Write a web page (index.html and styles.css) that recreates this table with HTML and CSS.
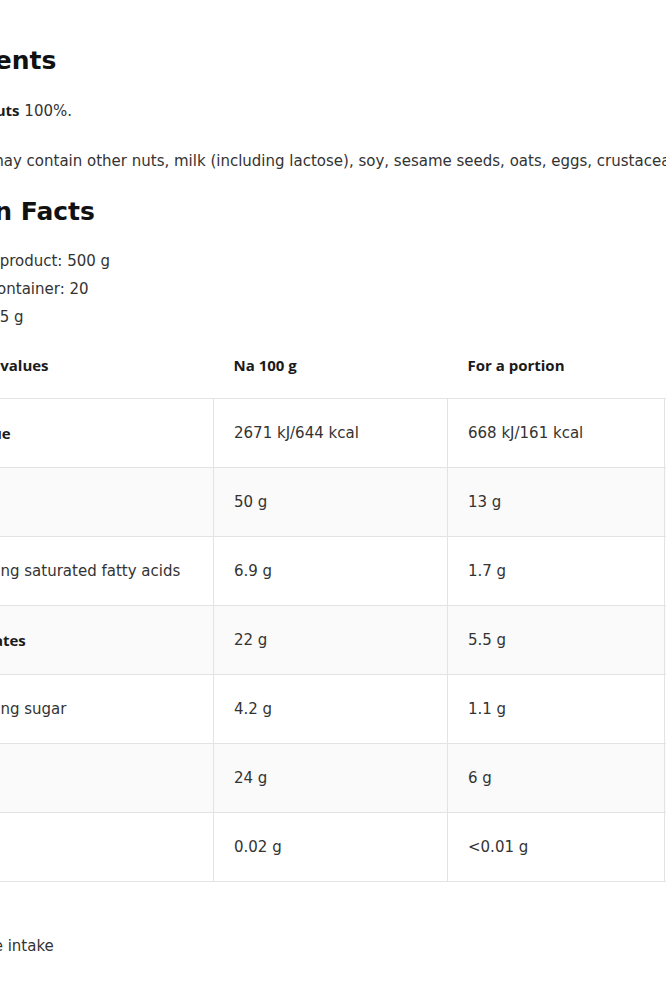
FILE: index.html
```html
<!DOCTYPE html>
<html lang="en">
<head>
<meta charset="utf-8">
<title>Peanut butter – Ingredients &amp; Nutrition Facts</title>
<link rel="stylesheet" href="styles.css">
</head>
<body>
<main class="page">
  <section class="block">
    <h2 class="title">Ingredients</h2>
    <p class="text ingredients"><strong>Roasted peanuts</strong> 100%.</p>
    <p class="text allergens">The product may contain other nuts, milk (including lactose), soy, sesame seeds, oats, eggs, crustaceans, fish, celery, mustard and lupine.</p>
  </section>
  <section class="block">
    <h2 class="title facts-title">Nutrition Facts</h2>
    <div class="meta">
      <p class="meta-line">Net weight of product: 500 g</p>
      <p class="meta-line">Portions per container: 20</p>
      <p class="meta-line">Portion size: 25 g</p>
    </div>
    <table class="nutri">
      <colgroup>
        <col class="c1"><col class="c2"><col class="c3"><col class="c4">
      </colgroup>
      <thead>
        <tr><th>Nutritional values</th><th>Na 100 g</th><th>For a portion</th><th>%RI*</th></tr>
      </thead>
      <tbody>
        <tr><td class="label">Energy value</td><td>2671 kJ/644 kcal</td><td>668 kJ/161 kcal</td><td>8%</td></tr>
        <tr><td class="label">Fat</td><td>50 g</td><td>13 g</td><td>19%</td></tr>
        <tr><td class="sub">- including saturated fatty acids</td><td>6.9 g</td><td>1.7 g</td><td>9%</td></tr>
        <tr><td class="label">Carbohydrates</td><td>22 g</td><td>5.5 g</td><td>2%</td></tr>
        <tr><td class="sub">- including sugar</td><td>4.2 g</td><td>1.1 g</td><td>1%</td></tr>
        <tr><td class="label">Protein</td><td>24 g</td><td>6 g</td><td>12%</td></tr>
        <tr><td class="label">Salt</td><td>0.02 g</td><td>&lt;0.01 g</td><td>0%</td></tr>
      </tbody>
    </table>
    <p class="text note">*RI - reference intake</p>
  </section>
</main>
</body>
</html>
```

FILE: styles.css
```css
html, body {
  margin: 0;
  padding: 0;
  background: #ffffff;
}
body {
  overflow: hidden;
  font-family: "DejaVu Sans", "Open Sans", sans-serif;
  color: #333333;
  font-size: 15px;
}
.page {
  margin-left: -106px;
  width: 1100px;
  padding-top: 45px;
}
.block {
  display: flex;
  flex-direction: column;
}
.title {
  margin: 0;
  font-family: "DejaVu Sans", sans-serif;
  font-size: 25px;
  line-height: 32px;
  font-weight: 700;
  color: #111111;
}
.text {
  margin: 0;
  line-height: 24px;
}
.text strong {
  font-family: "Open Sans", sans-serif;
  font-weight: 700;
  color: #1a1a1a;
}
.ingredients {
  margin-top: 21px;
}
.allergens {
  margin-top: 26px;
  white-space: nowrap;
}
.facts-title {
  margin-top: 23px;
  margin-left: -9px;
}
.meta {
  margin-top: 19px;
}
.meta-line {
  margin: 0;
  line-height: 28px;
}
.nutri {
  border-collapse: collapse;
  table-layout: fixed;
  width: 970px;
}
.c1 { width: 319px; }
.c2 { width: 234px; }
.c3 { width: 217px; }
.c4 { width: 200px; }
.nutri th {
  height: 67px;
  padding: 0 20px 0 20px;
  text-align: left;
  font-family: "Open Sans", sans-serif;
  font-weight: 700;
  color: #1a1a1a;
  border-bottom: 1px solid #e3e3e3;
}
.nutri th:first-child {
  padding-left: 18px;
}
.nutri td {
  height: 68px;
  padding: 0 20px;
  border: 1px solid #e3e3e3;
  color: #333333;
  white-space: nowrap;
}
.nutri tbody tr:nth-child(even) td {
  background: #fafafa;
}
.nutri td.label {
  font-family: "Open Sans", sans-serif;
  font-weight: 700;
  color: #1a1a1a;
}
.nutri td.sub {
  padding-left: 46px;
}
.note {
  margin-top: 52px;
}
```
